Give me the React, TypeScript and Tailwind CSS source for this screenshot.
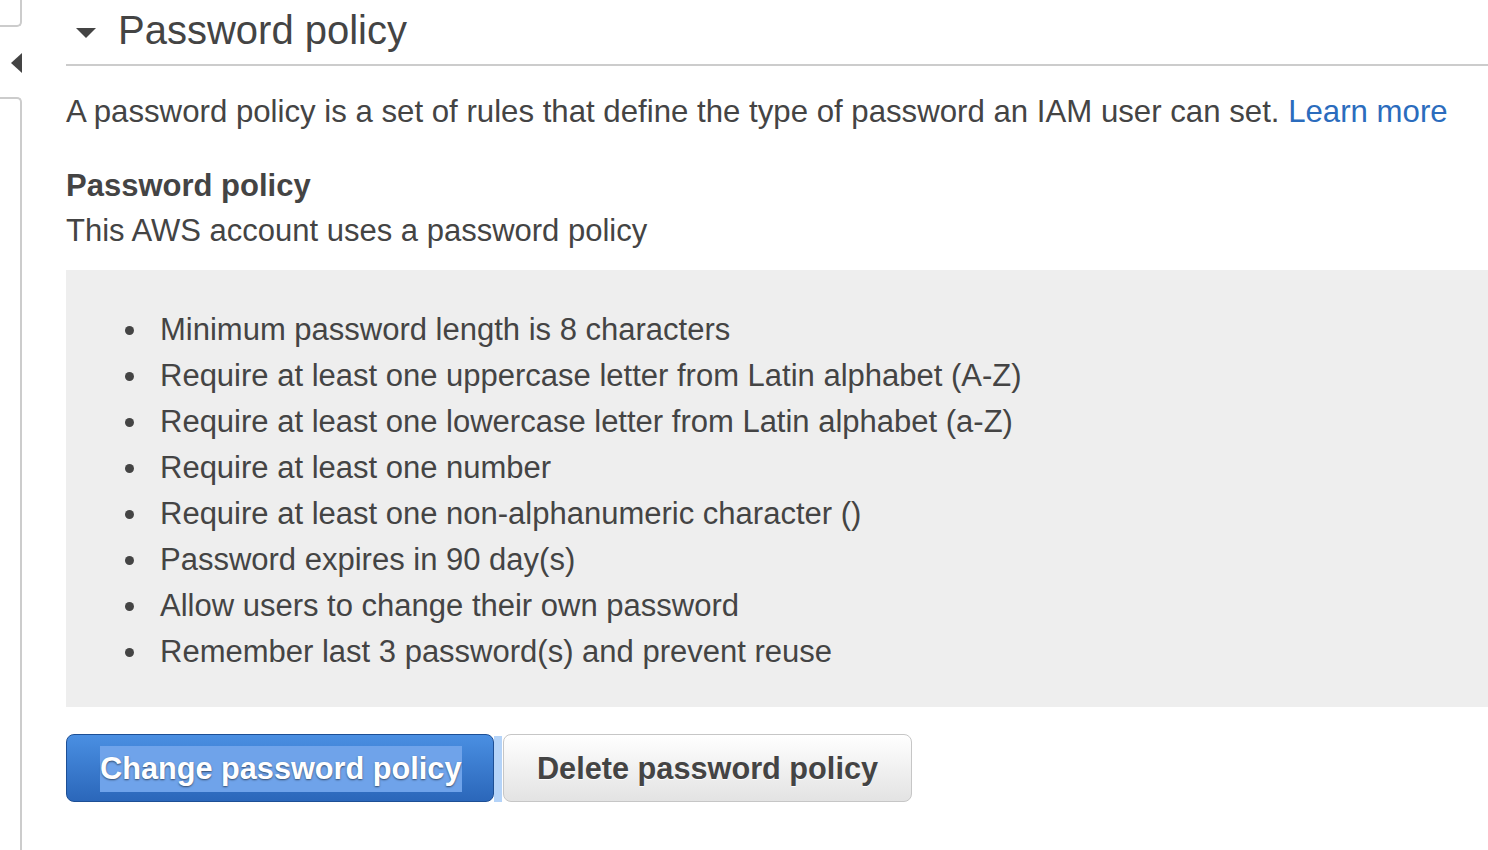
import React from "react";

const rules = [
  "Minimum password length is 8 characters",
  "Require at least one uppercase letter from Latin alphabet (A-Z)",
  "Require at least one lowercase letter from Latin alphabet (a-Z)",
  "Require at least one number",
  "Require at least one non-alphanumeric character ()",
  "Password expires in 90 day(s)",
  "Allow users to change their own password",
  "Remember last 3 password(s) and prevent reuse",
];

const SideTab: React.FC = () => (
  <div className="flex w-[22px] shrink-0 flex-col">
    <div className="h-[27px] rounded-br-[5px] border-r-2 border-b-2 border-[#cccccc]" />
    <div className="flex h-[70px] items-center">
      <svg width="11" height="20" viewBox="0 0 11 20" className="ml-[11px] mt-[2px]">
        <polygon points="11,0 11,20 0,10" fill="#444444" />
      </svg>
    </div>
    <div className="flex-1 rounded-tr-[5px] border-t-2 border-r-2 border-[#cccccc]" />
  </div>
);

export default function App() {
  return (
    <div className="flex min-h-[850px] bg-white font-['Liberation_Sans',Arial,sans-serif] text-[#444444]">
      <SideTab />
      <main className="ml-[44px] flex-1">
        {/* section header */}
        <div className="flex h-[64px] items-start pt-[7px]">
          <svg width="20" height="10" viewBox="0 0 20 10" className="ml-[10px] mt-[21px]">
            <polygon points="0,0 20,0 10,10" fill="#444444" />
          </svg>
          <h1 className="ml-[22px] text-[40px] leading-[46px] font-normal">Password policy</h1>
        </div>
        <div className="h-[2px] bg-[#cccccc]" />

        <p className="mt-[28px] text-[31.2px] leading-[36px]">
          A password policy is a set of rules that define the type of password an IAM user can set.{" "}
          <a href="#" className="text-[#2b6cbd]">
            Learn more
          </a>
        </p>

        <h2 className="mt-[33px] text-[31px] leading-[45px] font-bold">Password policy</h2>
        <p className="text-[31px] leading-[45px]">This AWS account uses a password policy</p>

        <div className="mt-[17px] bg-[#eeeeee] pt-[37px] pb-[32px] pl-[59px]">
          <ul>
            {rules.map((r) => (
              <li key={r} className="flex h-[46px] items-center text-[31px]">
                <span className="mr-[26px] h-[9px] w-[9px] shrink-0 rounded-full bg-[#444444]" />
                <span>{r}</span>
              </li>
            ))}
          </ul>
        </div>

        <div className="mt-[27px] flex items-stretch">
          <button className="flex h-[68px] w-[428px] items-center rounded-[8px] border-[1.5px] border-[#1d4f95] bg-linear-to-b from-[#4a8fe2] to-[#2b67ba] pt-[2px] pl-[33px] text-[30.7px] font-bold text-white [text-shadow:0_1px_2px_rgba(0,0,0,0.55)]">
            <span className="bg-[#6fa3ea] leading-[46px]">Change password policy</span>
          </button>
          <div className="mt-[2px] h-[66px] w-[8px] bg-[#b4d3f8]" />
          <button className="ml-[1px] flex h-[68px] w-[409px] items-center justify-center rounded-[8px] border-[1.5px] border-[#c6c6c6] bg-linear-to-b from-white to-[#e3e3e3] pt-[3px] text-[30.7px] font-bold text-[#444444] [text-shadow:0_1px_0_rgba(255,255,255,0.9)]">
            Delete password policy
          </button>
        </div>
      </main>
    </div>
  );
}
